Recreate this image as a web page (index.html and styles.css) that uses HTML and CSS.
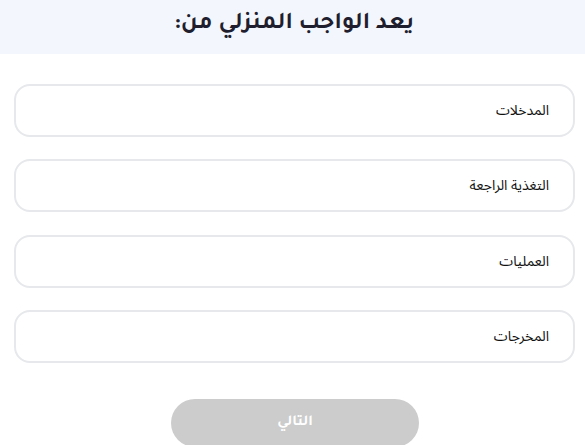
FILE: index.html
```html
<!DOCTYPE html>
<html lang="ar" dir="rtl">
<head>
<meta charset="utf-8">
<link rel="stylesheet" href="styles.css">
</head>
<body>
<header class="head"><h1 class="title">يعد الواجب المنزلي من:</h1></header>
<main class="options">
  <div class="option">المدخلات</div>
  <div class="option">التغذية الراجعة</div>
  <div class="option">العمليات</div>
  <div class="option">المخرجات</div>
</main>
<div class="actions"><button class="next">التالي</button></div>
</body>
</html>
```
FILE: styles.css
```css
* { box-sizing: border-box; }
html, body { margin: 0; padding: 0; background: #fff; }
body { font-family: "Noto Sans Arabic", "DejaVu Sans", sans-serif; width: 585px; height: 445px; overflow: hidden; }
.head { background: #f3f6fd; height: 54px; display: flex; align-items: center; justify-content: center; }
.title { margin: 0; font-family: "Tajawal", sans-serif; font-weight: bold; font-size: 24px; line-height: 1; color: #1e1e2e; padding-bottom: 5px; padding-left: 3px; }
.options { display: flex; flex-direction: column; gap: 22.3px; padding: 30px 10px 0 14px; }
.option { height: 53px; border: 2px solid #e6e8eb; border-radius: 16px; display: flex; align-items: center; padding: 0 24px; font-size: 14px; color: #111; }
.actions { display: flex; justify-content: center; padding-top: 36px; padding-left: 5px; }
.next { width: 248px; height: 48px; border: none; border-radius: 24px; background: #cccccc; color: #fff; font-family: "Tajawal", sans-serif; font-weight: bold; font-size: 15px; }
```
